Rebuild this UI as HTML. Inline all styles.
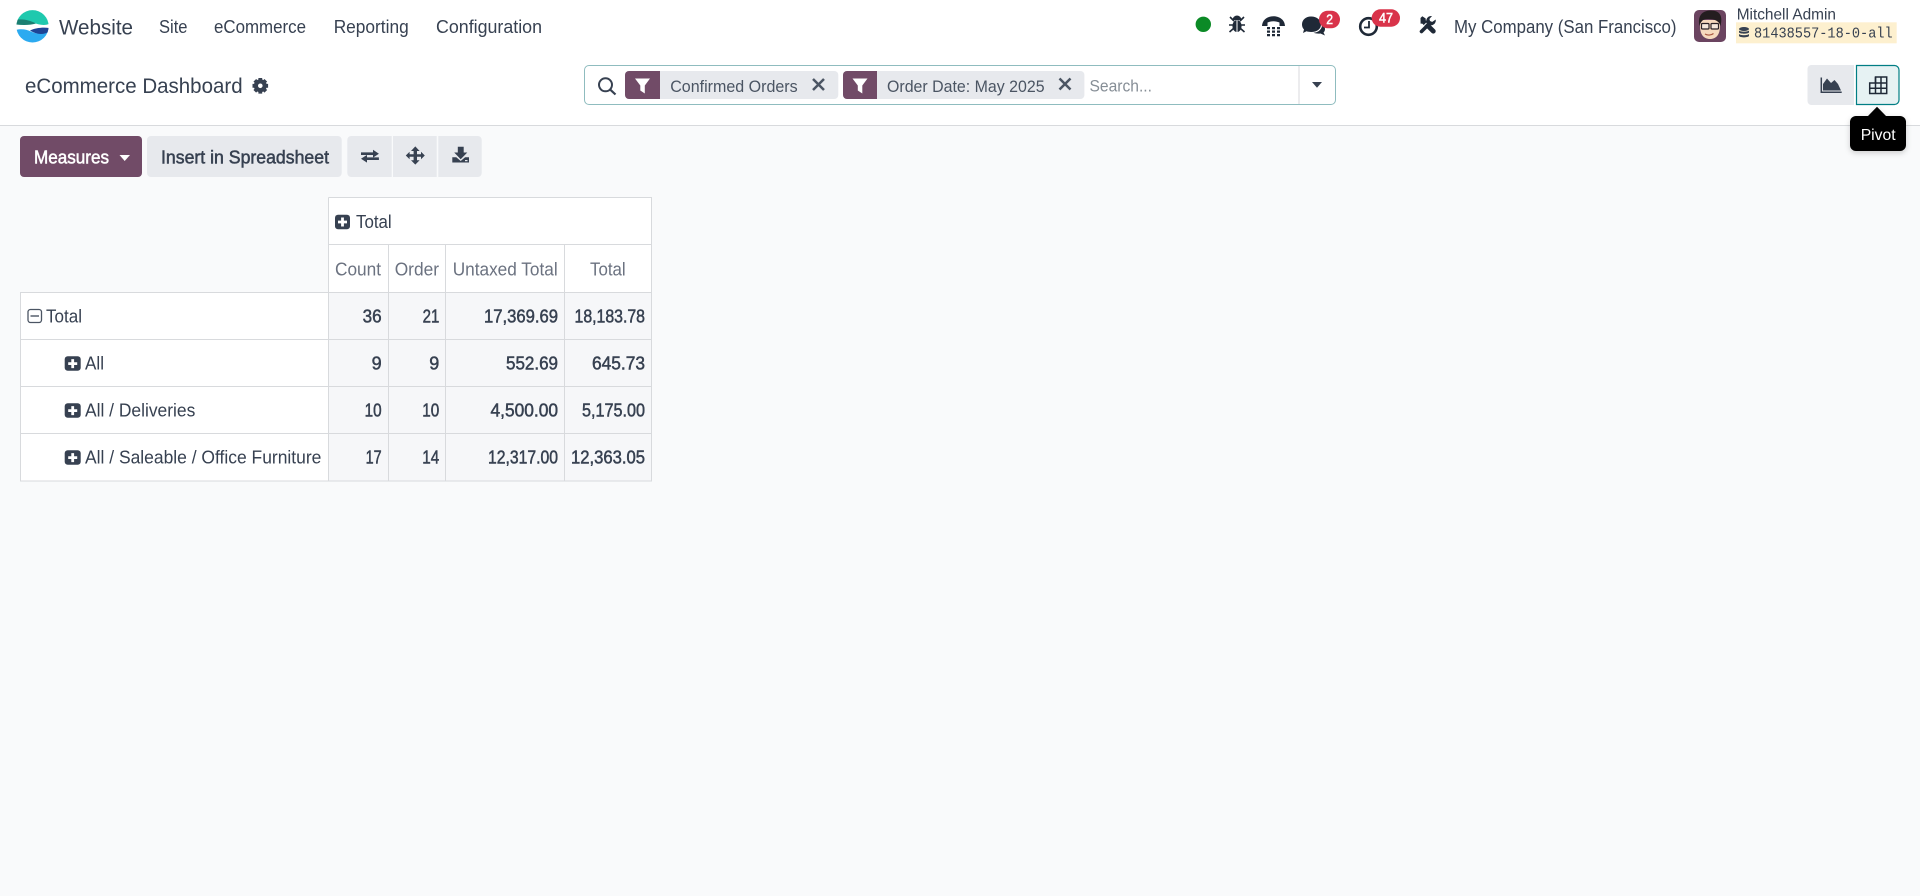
<!DOCTYPE html>
<html lang="en"><head><meta charset="utf-8"><title>eCommerce Dashboard</title>
<style>
html,body{margin:0;padding:0;width:1920px;height:896px;overflow:hidden;background:#f9fafb}
svg{display:block}
text{font-family:"Liberation Sans",sans-serif;font-size:18px;fill:#374151}
.b{stroke:#374151;stroke-width:.5px}
.w{fill:#fff;stroke:#fff}
.h{fill:#6b7280}
.f{font-size:17px;fill:#4b5563}
.m{font-family:"Liberation Mono",monospace;font-size:14.5px}
</style></head><body>
<svg width="1920" height="896" viewBox="0 0 1920 896" xmlns="http://www.w3.org/2000/svg">
<defs>
<clipPath id="lc"><circle cx="32.5" cy="26.3" r="16.2"/></clipPath>
<filter id="sh" x="-20%" y="-20%" width="140%" height="150%"><feDropShadow dx="0" dy="2" stdDeviation="3" flood-color="#000" flood-opacity=".18"/></filter>
</defs>
<rect width="1920" height="896" fill="#f9fafb"/>
<rect width="1920" height="125" fill="#fff"/>
<rect y="125" width="1920" height="1" fill="#d8dadd"/>

<!-- logo -->
<g clip-path="url(#lc)">
<rect x="16" y="10" width="34" height="34" fill="#fff"/>
<path d="M16 10H49V24C44 26 38 24.500 33 22.500C28 20.500 22 19 16 21Z" fill="#1fc9ae"/>
<path d="M16 20C22 18.500 29 20 36 23.500C31 25 24 25.500 16 24.500Z" fill="#1b7f72"/>
<path d="M16 30C21 28.500 27 29.500 31 31.500C37 34.500 44 34 49 30.500V43H16Z" fill="#2caaf0"/>
<path d="M30 30.500C35 28 43 27 49 28V31.500C44 35 37 35 30 30.500Z" fill="#1d4496"/>
</g>

<!-- nav -->
<text x="59" y="34.300" textLength="74" lengthAdjust="spacingAndGlyphs" style="font-size:21.500px">Website</text>
<text x="159" y="32.800" textLength="28.500" lengthAdjust="spacingAndGlyphs">Site</text>
<text x="214" y="32.800" textLength="92" lengthAdjust="spacingAndGlyphs">eCommerce</text>
<text x="333.700" y="32.800" textLength="75" lengthAdjust="spacingAndGlyphs">Reporting</text>
<text x="436" y="32.800" textLength="106" lengthAdjust="spacingAndGlyphs">Configuration</text>

<!-- systray -->
<circle cx="1203.300" cy="24.300" r="7.700" fill="#0b8a26"/>
<g fill="#1f2937">
<ellipse cx="1237" cy="26" rx="4.600" ry="6"/><path d="M1232.500 20a4.500 4.500 0 0 1 9 0z"/>
<path d="M1230 17l4 4M1244 17l-4 4M1229 25h16M1229.500 32l4-3.500M1244.500 32l-4-3.500" stroke="#1f2937" stroke-width="1.600" fill="none"/>
<rect x="1236.500" y="20" width="1" height="12" fill="#fff"/>
<path d="M1262 26C1262.500 13 1284.500 13 1285 26H1279.500V22.500C1275.500 20.800 1271.500 20.800 1267.500 22.500V26Z"/>
<path d="M1267 27h3v2.300h-3zM1272 27h3v2.300h-3zM1277 27h3v2.300h-3zM1267 30.500h3v2.300h-3zM1272 30.500h3v2.300h-3zM1277 30.500h3v2.300h-3zM1267 34h3v2.300h-3zM1272 34h3v2.300h-3zM1277 34h3v2.300h-3z"/>
<path d="M1311 16.500C1317 16.500 1321 20 1321 24.500C1321 29 1317 32 1311 32C1309.500 32 1308 31.800 1306.500 31.300L1303 33L1304 29.500C1302.700 28 1302 26.500 1302 24.500C1302 20 1305.500 16.500 1311 16.500Z"/>
<path d="M1322 24C1324 25.500 1325 27 1325 29C1325 30.500 1324.500 31.500 1323.500 32.500L1325 35.500L1320.500 33.500C1318 33.800 1315.500 33.500 1313.500 32.800C1318.500 32.500 1322.500 29 1322 24Z"/>
<!-- tools -->
<path d="M1421.500 31.500L1430 23" stroke="#1f2937" stroke-width="3.600" stroke-linecap="round" fill="none"/>
<path d="M1435.700 19.500a5 5 0 0 1-6.800 5.500l-2.500-2.800a5 5 0 0 1 5.600-6.200l-2.600 3 .7 2.200 2.200.7z"/>
<path d="M1420.500 18l1.800-1.800 3.400 2.300v1.700l9.300 9.300a2.400 2.400 0 0 1-3.400 3.400l-9.300-9.300h-1.700z"/>
<path d="M1424 25.500l2.500-2.500" stroke="#fff" stroke-width="1"/>
</g>
<circle cx="1368.500" cy="26.500" r="8.300" fill="none" stroke="#1f2937" stroke-width="2.600"/>
<path d="M1369 21v6.500h-5" fill="none" stroke="#1f2937" stroke-width="1.800"/>
<rect x="1319" y="10.700" width="21" height="17.600" rx="8.800" fill="#d9334a"/>
<text class="b w" x="1326.300" y="24" textLength="6.800" lengthAdjust="spacingAndGlyphs" style="font-size:14px">2</text>
<rect x="1371.700" y="9.300" width="28.300" height="17.400" rx="8.700" fill="#d9334a"/>
<text class="b w" x="1379" y="22.500" textLength="14" lengthAdjust="spacingAndGlyphs" style="font-size:14px">47</text>

<text x="1454" y="32.800" textLength="222.500" lengthAdjust="spacingAndGlyphs">My Company (San Francisco)</text>

<!-- avatar -->
<rect x="1694" y="10" width="32" height="32" rx="5" fill="#6b4460"/>
<path d="M1700 26C1700 36 1705 39 1710 39C1715 39 1720 36 1720 26V20H1700Z" fill="#f6d9be"/>
<path d="M1699.500 26C1697 14 1704 10.500 1711 10.500C1720 10.500 1723 16 1720.500 26C1719 21 1715 19 1708 19C1703 19 1701 21 1699.500 26Z" fill="#241d20"/>
<rect x="1701.500" y="23.500" width="7.500" height="5.500" rx="1" fill="#f6e8dc" stroke="#2b2327" stroke-width="1.200"/>
<rect x="1711" y="23.500" width="7.500" height="5.500" rx="1" fill="#f6e8dc" stroke="#2b2327" stroke-width="1.200"/>
<path d="M1705 34c2.500 1.500 6 1.500 8.500-.5" fill="none" stroke="#a8553f" stroke-width="1.200"/>

<text x="1736.700" y="19.500" textLength="99.300" lengthAdjust="spacingAndGlyphs" style="font-size:16px">Mitchell Admin</text>
<rect x="1736" y="22.300" width="160.700" height="21" fill="#fdf0cf"/>
<g fill="#374151"><ellipse cx="1744" cy="29" rx="5" ry="2"/><path d="M1739 30.500c1.500 1.600 8.500 1.600 10 0v2c-1.500 1.600-8.500 1.600-10 0zM1739 34c1.500 1.600 8.500 1.600 10 0v2c-1.500 1.800-8.500 1.800-10 0z"/></g>
<text class="m" x="1754" y="37.700" textLength="138.700" lengthAdjust="spacingAndGlyphs">81438557-18-0-all</text>

<!-- control panel -->
<text x="25" y="92.800" textLength="217.600" lengthAdjust="spacingAndGlyphs" style="font-size:21.500px">eCommerce Dashboard</text>
<g transform="translate(260.300 85.800)">
<circle r="4.400" fill="none" stroke="#374151" stroke-width="4.200"/>
<path d="M-1.900-7.800h3.800v3h-3.800zM-1.900 4.800h3.800v3h-3.800zM-7.800-1.900h3v3.800h-3zM4.800-1.900h3v3.800h-3z" fill="#374151"/>
<path d="M-1.900-7.800h3.800v3h-3.800zM-1.900 4.800h3.800v3h-3.800zM-7.800-1.900h3v3.800h-3zM4.800-1.900h3v3.800h-3z" fill="#374151" transform="rotate(45)"/>
</g>

<!-- search -->
<rect x="584.500" y="65.500" width="751" height="39" rx="4.500" fill="#fff" stroke="#8fbcbf"/>
<rect x="1298.500" y="66" width="1" height="38" fill="#d8dadd"/>
<circle cx="605.500" cy="84.800" r="6.500" fill="none" stroke="#374151" stroke-width="2"/>
<path d="M610.300 89.700L615.500 94.500" stroke="#374151" stroke-width="2.200" fill="none"/>
<path d="M1312 82h10l-5 5.700z" fill="#374151"/>

<rect x="625" y="71" width="213.300" height="28" rx="4" fill="#e7e9ed"/>
<path d="M660 71H629a4 4 0 0 0-4 4V95a4 4 0 0 0 4 4H660Z" fill="#714b67"/>
<path d="M635 78.500H650L644.800 85.500V93.500L640.300 90.500V85.500Z" fill="#fff"/>
<text class="f" x="670.200" y="91.800" textLength="127.500" lengthAdjust="spacingAndGlyphs">Confirmed Orders</text>
<path d="M813 79l11 11M824 79l-11 11" stroke="#4b5563" stroke-width="2.500"/>

<rect x="843" y="71" width="241.400" height="28" rx="4" fill="#e7e9ed"/>
<path d="M877 71H847a4 4 0 0 0-4 4V95a4 4 0 0 0 4 4H877Z" fill="#714b67"/>
<path d="M852.500 78.500H867.500L862.300 85.500V93.500L857.800 90.500V85.500Z" fill="#fff"/>
<text class="f" x="887" y="91.800" textLength="157.600" lengthAdjust="spacingAndGlyphs">Order Date: May 2025</text>
<path d="M1059.500 78.500l11 11M1070.500 78.500l-11 11" stroke="#4b5563" stroke-width="2.500"/>
<text x="1089.500" y="91.500" textLength="62.500" lengthAdjust="spacingAndGlyphs" style="font-size:17px;fill:#868e96">Search...</text>

<!-- view switcher -->
<path d="M1854 65H1811.500a4 4 0 0 0-4 4V101a4 4 0 0 0 4 4H1854Z" fill="#e7e9ed"/>
<path d="M1856.500 65.500H1894.500a4.500 4.500 0 0 1 4.500 4.500V100a4.500 4.500 0 0 1-4.500 4.500H1856.500Z" fill="#e6f2f3" stroke="#017e84" stroke-width="1.200"/>
<path d="M1821.300 77.500V92.300H1841.700" fill="none" stroke="#374151" stroke-width="1.500"/>
<path d="M1823 90.500V84L1827 78.500L1831 83L1834.500 80L1838 84L1841 90.500Z" fill="#374151"/>
<g fill="none" stroke="#1f2937" stroke-width="1.500">
<path d="M1875.500 77H1886.700V93.500H1869.700V83H1875.500Z"/>
<path d="M1869.700 88.200H1886.700M1875.500 83H1886.700M1875.500 77V93.500M1881 77V93.500"/>
</g>
<g filter="url(#sh)">
<path d="M1877 106.700L1868 116H1886Z" fill="#000"/>
<rect x="1850" y="116" width="56" height="35" rx="6" fill="#000"/>
</g>
<text x="1860.700" y="140" textLength="35" lengthAdjust="spacingAndGlyphs" style="font-size:16px;fill:#fff">Pivot</text>

<!-- toolbar -->
<rect x="20" y="136" width="122" height="41" rx="4" fill="#714b67"/>
<text class="b w" x="34" y="163.300" textLength="75" lengthAdjust="spacingAndGlyphs">Measures</text>
<path d="M119.500 155H130L124.700 161Z" fill="#fff"/>
<rect x="147" y="136" width="194.700" height="41" rx="4" fill="#e7e9ed"/>
<text class="b" x="161" y="163.300" textLength="168" lengthAdjust="spacingAndGlyphs">Insert in Spreadsheet</text>
<path d="M391.700 136H351.300a4 4 0 0 0-4 4V173a4 4 0 0 0 4 4H391.700Z" fill="#e7e9ed"/>
<rect x="393" y="136" width="43.700" height="41" fill="#e7e9ed"/>
<path d="M438.300 136H477.700a4 4 0 0 1 4 4V173a4 4 0 0 1-4 4H438.300Z" fill="#e7e9ed"/>
<g fill="#374151">
<path d="M361 152.400H373V149.800L378.900 153.700L373 157.600V155H361Z"/>
<path d="M378.900 157.400H367V154.900L361 158.700L367 162.600V160H378.900Z"/>
<path d="M415.300 146.400L419.600 151H417V154.200H421V151.700L424.800 155.500L421 159.300V156.800H417V160.200H419.600L415.300 164.600L411 160.200H413.600V156.800H409.600V159.300L405.800 155.500L409.600 151.700V154.200H413.600V151H411Z"/>
<path d="M457.800 146.700H463.700V152.500H467.300L460.700 159.200L454.200 152.500H457.800Z"/>
<path d="M452.300 157.300H456.300L460.700 161L465.100 157.300H469V162.500H452.300Z"/>
</g>
<rect x="465" y="160" width="2.500" height="1.200" fill="#e7e9ed"/>

<!-- pivot table -->
<rect x="328.500" y="197.500" width="323" height="95" fill="#fff"/>
<rect x="20.500" y="292.500" width="308" height="188.500" fill="#fff"/>
<rect x="328.500" y="292.500" width="323" height="188.500" fill="#f6f7f9"/>
<g fill="none" stroke="#d8dadd" stroke-width="1">
<path d="M328.500 197.500H651.500V481H20.500V292.500H651.500M328.500 197.500V481M328.500 244.500H651.500M388.500 244.500V481M445.500 244.500V481M564.500 244.500V481M20.500 339.500H651.500M20.500 386.500H651.500M20.500 433.500H651.500"/>
</g>

<rect x="335" y="214.800" width="15" height="14.500" rx="3" fill="#374151"/>
<path d="M342.500 217.500v9M338 222h9" stroke="#fff" stroke-width="2.800"/>
<text x="356" y="227.800" textLength="35.700" lengthAdjust="spacingAndGlyphs">Total</text>
<text class="h" x="335" y="275.300" textLength="46" lengthAdjust="spacingAndGlyphs">Count</text>
<text class="h" x="394.700" y="275.300" textLength="44.300" lengthAdjust="spacingAndGlyphs">Order</text>
<text class="h" x="452.700" y="275.300" textLength="105" lengthAdjust="spacingAndGlyphs">Untaxed Total</text>
<text class="h" x="590" y="275.300" textLength="35.700" lengthAdjust="spacingAndGlyphs">Total</text>

<rect x="28" y="309.500" width="13.500" height="13" rx="2.500" fill="none" stroke="#4b5563" stroke-width="1.300"/>
<path d="M30.500 316h8.500" stroke="#4b5563" stroke-width="1.400"/>
<text x="46" y="322.500" textLength="36" lengthAdjust="spacingAndGlyphs">Total</text>
<g fill="#374151">
<rect x="64.700" y="356.300" width="16" height="14.500" rx="3"/>
<rect x="64.700" y="403.300" width="16" height="14.500" rx="3"/>
<rect x="64.700" y="450.300" width="16" height="14.500" rx="3"/>
</g>
<path d="M72.700 359.100v9M68.200 363.600h9M72.700 406.100v9M68.200 410.600h9M72.700 453.100v9M68.200 457.600h9" stroke="#fff" stroke-width="2.800"/>
<text x="85" y="369.500" textLength="19" lengthAdjust="spacingAndGlyphs">All</text>
<text x="85" y="416.500" textLength="110.300" lengthAdjust="spacingAndGlyphs">All / Deliveries</text>
<text x="85" y="463.500" textLength="236.400" lengthAdjust="spacingAndGlyphs">All / Saleable / Office Furniture</text>

<text class="b" x="362.600" y="322.500" textLength="19" lengthAdjust="spacingAndGlyphs">36</text>
<text class="b" x="422.600" y="322.500" textLength="16.700" lengthAdjust="spacingAndGlyphs">21</text>
<text class="b" x="484" y="322.500" textLength="74" lengthAdjust="spacingAndGlyphs">17,369.69</text>
<text class="b" x="574.500" y="322.500" textLength="70.500" lengthAdjust="spacingAndGlyphs">18,183.78</text>

<text class="b" x="371.600" y="369.500" textLength="10" lengthAdjust="spacingAndGlyphs">9</text>
<text class="b" x="429.300" y="369.500" textLength="10" lengthAdjust="spacingAndGlyphs">9</text>
<text class="b" x="506" y="369.500" textLength="52" lengthAdjust="spacingAndGlyphs">552.69</text>
<text class="b" x="592" y="369.500" textLength="53" lengthAdjust="spacingAndGlyphs">645.73</text>

<text class="b" x="364.600" y="416.500" textLength="17" lengthAdjust="spacingAndGlyphs">10</text>
<text class="b" x="422.300" y="416.500" textLength="17" lengthAdjust="spacingAndGlyphs">10</text>
<text class="b" x="490.500" y="416.500" textLength="67.500" lengthAdjust="spacingAndGlyphs">4,500.00</text>
<text class="b" x="582" y="416.500" textLength="63" lengthAdjust="spacingAndGlyphs">5,175.00</text>

<text class="b" x="365.600" y="463.500" textLength="16" lengthAdjust="spacingAndGlyphs">17</text>
<text class="b" x="422.300" y="463.500" textLength="17" lengthAdjust="spacingAndGlyphs">14</text>
<text class="b" x="488" y="463.500" textLength="70" lengthAdjust="spacingAndGlyphs">12,317.00</text>
<text class="b" x="571" y="463.500" textLength="74" lengthAdjust="spacingAndGlyphs">12,363.05</text>
</svg>
</body></html>
